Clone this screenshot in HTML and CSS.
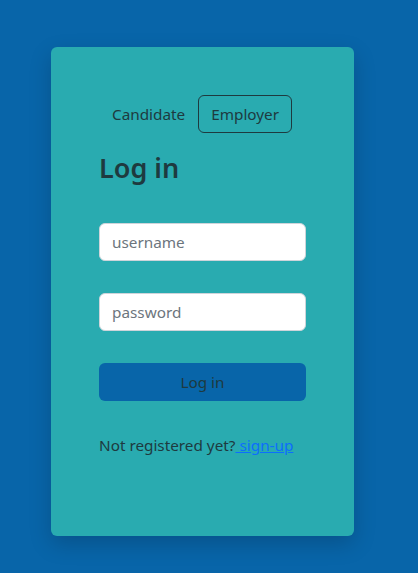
FILE: index.html
```html
<!DOCTYPE html>
<html>
<head>
<meta charset="utf-8">
<link rel="stylesheet" href="styles.css">
</head>
<body>
<div class="page">
  <div class="card">
    <div class="tabs">
      <button class="tab">Candidate</button>
      <button class="tab active">Employer</button>
    </div>
    <h2 class="title">Log in</h2>
    <input class="field" type="text" placeholder="username">
    <input class="field" type="password" placeholder="password">
    <button class="submit">Log in</button>
    <p class="note">Not registered yet?<a href="#"> sign-up</a></p>
  </div>
</div>
</body>
</html>
```
FILE: styles.css
```css
* { box-sizing: border-box; }
html, body { margin: 0; height: 100%; }
body {
  background: #0865a9;
  font-family: "Noto Sans", "Segoe UI", sans-serif;
  font-size: 15.3px;
  color: #1e3a3f;
}
.page {
  padding: 47px 0 0 51px;
}
.card {
  width: 303px;
  height: 489px;
  background: #29abb0;
  border-radius: 6px;
  box-shadow: 0 8px 22px rgba(0,0,0,0.18);
  padding: 48px 48px 0 48px;
  display: flex;
  flex-direction: column;
}
.tabs {
  display: flex;
  gap: 0;
}
.tab {
  font: inherit;
  color: #1e3a3f;
  background: transparent;
  border: 1px solid transparent;
  border-radius: 6px;
  height: 38px;
  padding: 0 12px;
  cursor: pointer;
}
.tab.active {
  border-color: #1e3a3f;
}
.title {
  margin: 18px 0 0 0;
  font-size: 27px;
  font-weight: 600;
  line-height: 34px;
  color: #1e3a3f;
}
.field {
  margin-top: 38px;
  width: 207px;
  height: 38px;
  border: 1px solid #ced4da;
  border-radius: 6px;
  padding: 0 12px;
  font: inherit;
  background: #fff;
  color: #212529;
}
.field + .field { margin-top: 32px; }
.field::placeholder { color: #6c757d; }
.submit {
  margin-top: 32px;
  width: 207px;
  height: 38px;
  border: none;
  border-radius: 6px;
  background: #0865a9;
  color: #1e3a3f;
  font: inherit;
}
.note {
  margin: 34px 0 0 0;
  line-height: 20px;
  color: #1e3a3f;
}
.note a { color: #0d6efd; }
```
